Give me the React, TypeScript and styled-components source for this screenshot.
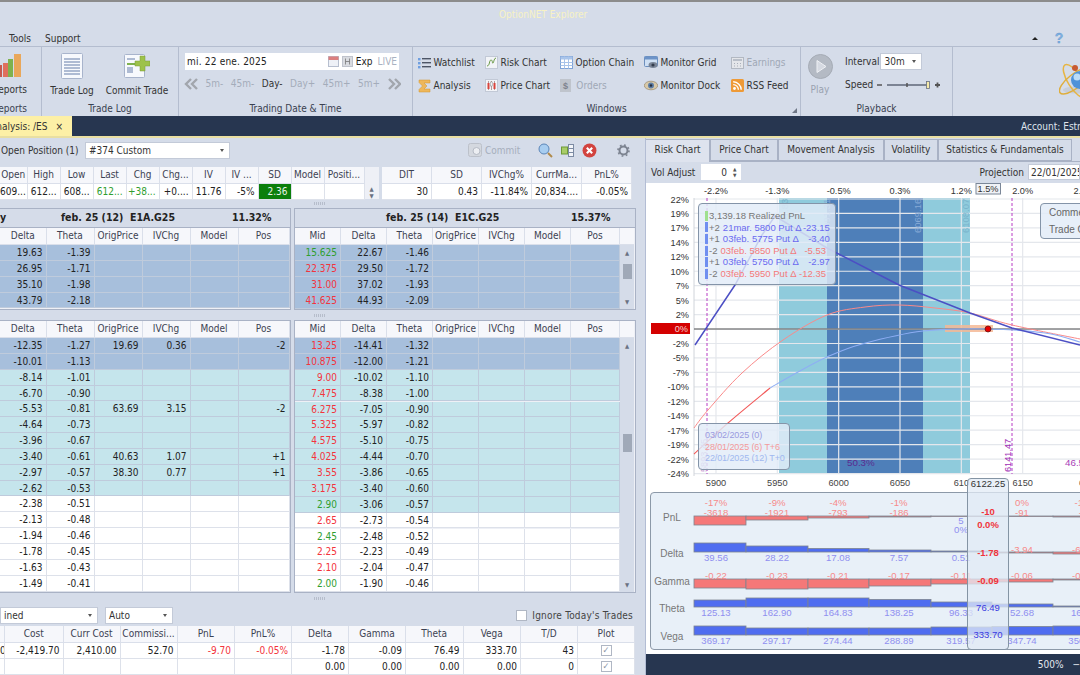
import React from 'react';
import styled, { createGlobalStyle } from 'styled-components';

const BG = '#d5dce9';
const NAVY = '#273650';
const UI_FONT = '"DejaVu Sans Condensed", "Noto Sans", sans-serif';

const Global = createGlobalStyle`
  html, body { margin: 0; padding: 0; height: 100%; overflow: hidden; background: ${BG}; }
  body { font-family: ${UI_FONT}; font-size: 10px; color: #222; }
  #root { width: 1080px; height: 675px; overflow: hidden; }
`;

const Page = styled.div`
  width: 1080px;
  height: 675px;
  overflow: hidden;
  display: flex;
  flex-direction: column;
  background: ${BG};
`;

const TitleBar = styled.div`
  flex: none;
  height: 28px;
  border-top: 2px solid #8c8c8c;
  padding-left: 6px;
  box-sizing: content-box;
  text-align: center;
  line-height: 25px;
  color: #f7f2c4;
  font-size: 10px;
`;

const MenuBar = styled.div`
  flex: none;
  height: 16px;
  display: flex;
  align-items: center;
  padding: 0 16px 0 9px;
  gap: 14px;
  color: #333;
`;

const MenuSpacer = styled.div`
  flex: 1;
`;

const CollapseMark = styled.span`
  width: 0;
  height: 0;
  margin-right: 2px;
  border-left: 3px solid transparent;
  border-right: 3px solid transparent;
  border-bottom: 3.5px solid #222;
`;

const Ribbon = styled.div`
  flex: none;
  height: 69px;
  display: flex;
  border-top: 1px solid #b4bdcf;
`;

const RibbonGroup = styled.div<{ $w: number }>`
  flex: none;
  width: ${p => p.$w}px;
  display: flex;
  flex-direction: column;
  border-right: 1px solid #b4bdcf;
  position: relative;
  overflow: hidden;
  &:last-child { border-right: none; }
`;

const GroupBody = styled.div`
  flex: 1;
  display: flex;
  min-height: 0;
`;

const GroupLabel = styled.div`
  flex: none;
  height: 16px;
  line-height: 17px;
  text-align: center;
  color: #3a4150;
  white-space: nowrap;
`;

const ClippedLabel = styled(GroupLabel)`
  display: flex;
  justify-content: flex-end;
  width: 27px;
`;

const BigButton = styled.div<{ $w: number; $clip?: boolean }>`
  flex: none;
  width: ${p => p.$w}px;
  display: flex;
  flex-direction: column;
  align-items: ${p => (p.$clip ? 'flex-end' : 'center')};
  padding-top: 6px;
  color: #333;
  white-space: nowrap;
  span { margin-top: 6px; }
`;

const TradeBody = styled(GroupBody)`
  padding-left: 6px;
  gap: 8px;
`;

const DateBody = styled.div`
  flex: 1;
  padding: 6px 0 0 6px;
`;

const DateField = styled.div`
  width: 214px;
  height: 17px;
  background: #fff;
  display: flex;
  align-items: center;
  gap: 3px;
  padding: 0 2px;
  box-sizing: border-box;
`;

const DateText = styled.span`
  flex: 1;
  letter-spacing: 0.2px;
`;

const LiveText = styled.span`
  color: #a9b2c2;
  margin-left: 2px;
`;

const StepRow = styled.div`
  display: flex;
  align-items: center;
  height: 27px;
  gap: 7.500px;
  color: #a4acba;
  svg { flex: none; margin-left: -1px; }
`;

const StepActive = styled.span`
  color: #333;
`;

const WindowsGrid = styled.div`
  display: grid;
  grid-template-columns: 67px 75px 84px 87px 60px;
  grid-auto-rows: 23px;
  padding: 4px 0 0 4.500px;
  flex: 1;
`;

const WinItem = styled.div<{ $dim?: boolean }>`
  display: flex;
  align-items: center;
  gap: 3px;
  white-space: nowrap;
  color: ${p => (p.$dim ? '#a0a8b6' : '#333')};
`;

const CornerMark = styled.div`
  position: absolute;
  right: 3px;
  bottom: 3px;
  width: 0;
  height: 0;
  border-left: 5px solid transparent;
  border-bottom: 5px solid #6f7786;
`;

const PlayColumn = styled.div`
  flex: none;
  width: 38px;
  display: flex;
  flex-direction: column;
  align-items: center;
  padding-top: 7px;
  color: #9aa2b0;
  span { margin-top: 5px; }
`;

const PlayControls = styled.div`
  padding: 6px 0 0 6px;
  display: flex;
  flex-direction: column;
  gap: 6px;
`;

const PlayRow = styled.div`
  display: flex;
  align-items: center;
  gap: 1px;
  height: 17px;
  color: #333;
`;

const Combo = styled.div<{ $w: number }>`
  flex: none;
  width: ${p => p.$w}px;
  height: 17px;
  box-sizing: border-box;
  background: #fff;
  border: 1px solid #c3cad8;
  display: flex;
  align-items: center;
  justify-content: space-between;
  padding: 0 5px 0 3px;
  color: #333;
  white-space: nowrap;
  &::after {
    content: '';
    border-left: 2.5px solid transparent;
    border-right: 2.5px solid transparent;
    border-top: 3px solid #555;
  }
`;

const LogoBody = styled(GroupBody)`
  justify-content: flex-end;
  padding-top: 12px;
`;

const TabBar = styled.div`
  flex: none;
  height: 20px;
  background: ${NAVY};
  display: flex;
  justify-content: space-between;
  align-items: stretch;
  border-bottom: 2px solid #e9dfa2;
`;

const DocTab = styled.div`
  width: 72px;
  background: #fdf0a6;
  display: flex;
  justify-content: flex-end;
  align-items: center;
  gap: 8px;
  padding: 1px 9px 0 0;
  box-sizing: border-box;
  overflow: hidden;
  white-space: nowrap;
  color: #333;
`;

const AccountText = styled.div`
  line-height: 22px;
  color: #dfe4ec;
  white-space: nowrap;
  width: 59px;
`;

const Workspace = styled.div`
  flex: 1;
  min-height: 0;
  display: flex;
`;

const LeftPane = styled.div`
  flex: none;
  width: 640px;
  overflow: hidden;
  display: flex;
  flex-direction: column;
`;

const Splitter = styled.div`
  flex: none;
  width: 6px;
  background: ${BG};
  border-right: 1px solid #b3bdd4;
  box-sizing: border-box;
`;

const PositionBar = styled.div`
  flex: none;
  height: 28px;
  display: flex;
  align-items: center;
  padding: 0 0 4px 1px;
  box-sizing: border-box;
  color: #333;
`;

const PositionLabel = styled.span`
  width: 84px;
  white-space: nowrap;
`;

const ToolIcons = styled.div`
  margin-left: 238px;
  display: flex;
  align-items: center;
`;

const CommitLabel = styled.span`
  color: #a6aebc;
  margin: 0 18px 0 2px;
`;

const IconGap = styled.span<{ $w: number }>`
  width: ${p => p.$w}px;
`;

const SummaryRow = styled.div`
  flex: none;
  display: flex;
  height: 32px;
  margin-top: 1px;
`;

const Grid = styled.div<{ $cols: string }>`
  display: grid;
  grid-template-columns: ${p => p.$cols};
`;

const HeadCell = styled.div`
  height: 17px;
  line-height: 16px;
  background: #f6f7fb;
  border-right: 1px solid #dadfea;
  border-bottom: 1px solid #dadfea;
  box-sizing: border-box;
  text-align: center;
  color: #3c4252;
  white-space: nowrap;
  overflow: hidden;
  padding: 0 1px;
`;

const ValueCell = styled.div<{ $bg?: string; $color?: string }>`
  height: 15.85px;
  line-height: 16px;
  background: ${p => p.$bg || '#fff'};
  color: ${p => p.$color || '#222'};
  border-right: 1px solid ${p => (p.$bg && p.$bg !== '#fff' ? '#bfcbdc' : '#dde1ea')};
  border-bottom: 1px solid ${p => (p.$bg && p.$bg !== '#fff' ? '#bfcbdc' : '#dde1ea')};
  box-sizing: border-box;
  text-align: right;
  padding-right: 3px;
  white-space: nowrap;
  overflow: hidden;
`;

const SummaryScroll = styled.div`
  width: 14px;
  height: 32px;
  background: #eef0f6;
  display: flex;
  flex-direction: column;
  justify-content: flex-end;
  align-items: center;
  color: #6a7282;
  font-size: 6px;
  line-height: 7px;
`;

const SecondSummary = styled(Grid)`
  margin-left: 3.500px;
`;

const GreenCell = styled(ValueCell)`
  background: #0b7f0b;
  color: #e8f3e8;
`;

const TablesRow = styled.div<{ $h: number }>`
  flex: none;
  height: ${p => p.$h}px;
  display: flex;
  gap: 3px;
`;

const OptionTable = styled.div<{ $w: number }>`
  flex: none;
  width: ${p => p.$w}px;
  border: 1px solid #a9b2c5;
  border-left: none;
  box-sizing: border-box;
  display: flex;
  flex-direction: column;
  overflow: hidden;
  background: #eef0f6;
`;

const RightTable = styled(OptionTable)`
  border-left: 1px solid #a9b2c5;
`;

const TableTitle = styled.div<{ $stub: number; $gap: number }>`
  flex: none;
  height: 19px;
  display: flex;
  align-items: center;
  padding-bottom: 2px;
  background: ${BG};
  font-weight: 700;
  font-size: 10.5px;
  color: #222;
  white-space: nowrap;
  border-bottom: 1px solid #a9b2c5;
  box-sizing: border-box;
  span:first-child { width: ${p => p.$stub}px; }
  span:nth-child(2) { width: 113px; margin-right: ${p => p.$gap}px; }
`;

const TableBody = styled.div`
  flex: 1;
  display: flex;
  min-height: 0;
`;

const Scrollbar = styled.div`
  flex: none;
  width: 14px;
  background: ${BG};
  display: flex;
  flex-direction: column;
  align-items: center;
  color: #6a7282;
  font-size: 6px;
  padding: 4px 0;
  box-sizing: border-box;
`;

const ScrollThumb = styled.div<{ $top: number; $h: number }>`
  width: 9px;
  height: ${p => p.$h}px;
  margin-top: ${p => p.$top}px;
  margin-bottom: auto;
  background: #a0a9b8;
`;

const HeaderEnd = styled(HeadCell)`
  border-right: none;
`;

const SplitGrip = styled.div<{ $h: number }>`
  flex: none;
  height: ${p => p.$h}px;
  display: flex;
  justify-content: center;
  align-items: center;
  &::after {
    content: '';
    width: 12px;
    height: 3px;
    background: repeating-linear-gradient(90deg, #b6bdcb 0 1px, transparent 1px 2px);
  }
`;

const LowerBar = styled.div`
  flex: none;
  height: 22px;
  display: flex;
  align-items: center;
  gap: 7px;
  padding-right: 7px;
  color: #333;
`;

const IgnoreBox = styled.label`
  margin-left: auto;
  display: flex;
  align-items: center;
  gap: 5px;
  color: #444;
  letter-spacing: 0.2px;
`;

const CheckBox = styled.span`
  width: 9px;
  height: 9px;
  border: 1px solid #b0b7c4;
  background: #fff;
  display: inline-flex;
  align-items: center;
  justify-content: center;
  color: #8a93a3;
  font-size: 9px;
  line-height: 9px;
`;

const CenterCell = styled(ValueCell)`
  display: flex;
  align-items: center;
  justify-content: center;
  padding: 0;
`;

const RightPane = styled.div`
  flex: none;
  width: 434px;
  display: flex;
  flex-direction: column;
`;

const TabStrip = styled.div`
  flex: none;
  height: 24px;
  padding-top: 1px;
  box-sizing: border-box;
  display: flex;
  align-items: stretch;
  border-bottom: 1px solid #a9b2c5;
`;

const ChartTab = styled.div<{ $w: number; $active?: boolean }>`
  flex: none;
  width: ${p => p.$w}px;
  box-sizing: border-box;
  text-align: center;
  line-height: 20px;
  white-space: nowrap;
  color: #333;
  background: ${p => (p.$active ? '#dee3ee' : BG)};
  border: 1px solid #a9b2c5;
  border-left: ${p => (p.$active ? 'none' : '1px solid #a9b2c5')};
  margin-bottom: ${p => (p.$active ? '-1px' : '0')};
  border-bottom: ${p => (p.$active ? 'none' : '1px solid #a9b2c5')};
`;

const ControlRow = styled.div`
  flex: none;
  height: 21px;
  display: flex;
  align-items: center;
  padding: 0 0 1px 5px;
  box-sizing: border-box;
  color: #333;
  white-space: nowrap;
`;

const Spin = styled.div`
  width: 45px;
  height: 16px;
  margin-left: 6px;
  background: #fff;
  box-sizing: border-box;
  display: flex;
  align-items: center;
  justify-content: flex-end;
  padding-right: 4px;
  gap: 6px;
`;

const SpinArrows = styled.span`
  display: inline-flex;
  flex-direction: column;
  font-size: 5px;
  line-height: 6px;
  color: #555;
`;

const ProjectionLabel = styled.span`
  margin-left: 239px;
`;

const DateBox = styled.div`
  margin-left: 4px;
  width: 60px;
  height: 16px;
  line-height: 15px;
  padding-left: 2px;
  background: #fff;
  border: 1px solid #c3cad8;
  box-sizing: border-box;
  overflow: hidden;
`;

const ChartArea = styled.div`
  flex: 1;
  min-height: 0;
  background: #fff;
  position: relative;
  overflow: hidden;
`;

const ChartSvg = styled.svg`
  display: block;
  font-family: "Liberation Sans", sans-serif;
  font-size: 9.200px;
`;

const StatsChart = styled(ChartSvg)`
  font-size: 9.600px;
`;

const PanelWrap = styled.div`
  position: absolute;
  left: 4px;
  top: 309px;
  width: 440px;
  height: 158px;
  background: #e8f0f8;
  border: 1px solid #8c99a8;
  border-radius: 4px;
  box-sizing: border-box;
`;

const Overlay = styled.div<{ $l: number; $t: number; $w: number; $h: number }>`
  position: absolute;
  left: ${p => p.$l}px;
  top: ${p => p.$t}px;
  width: ${p => p.$w}px;
  height: ${p => p.$h}px;
  box-sizing: border-box;
  background: rgba(226, 235, 248, 0.82);
  border: 1px solid #8494a8;
  border-radius: 4px;
  font-family: "Liberation Sans", sans-serif;
  font-size: 9.500px;
  overflow: hidden;
`;

const LegendBox = styled(Overlay)`
  padding-top: 6px;
`;

const LegendRow = styled.div`
  height: 11.600px;
  line-height: 11.600px;
  display: flex;
  align-items: center;
  white-space: nowrap;
  color: #777;
  span { flex: none; }
`;

const LegendMark = styled.span<{ $c: string }>`
  width: 3px;
  height: 10px;
  background: ${p => p.$c};
  margin: 0 1px 0 6px;
`;

const LegendName = styled.span<{ $c: string; $w: number }>`
  color: ${p => p.$c};
  width: ${p => p.$w}px;
  margin-left: 3px;
`;

const LegendValue = styled.span<{ $c: string }>`
  color: ${p => p.$c};
  width: 32px;
  text-align: right;
`;

const CommentTitle = styled.div`
  color: #666;
  font-size: 10px;
  padding: 3px 0 3px 8px;
  white-space: nowrap;
`;

const DatesRow = styled.div<{ $c: string }>`
  color: ${p => p.$c};
  padding-left: 6px;
  line-height: 11.600px;
  font-size: 9px;
  letter-spacing: -0.1px;
  white-space: nowrap;
`;

const DatesBox = styled(Overlay)`
  padding-top: 6px;
`;

const PriceColumn = styled.div`
  position: absolute;
  left: 321px;
  top: 295px;
  width: 42px;
  height: 172px;
  box-sizing: border-box;
  background: rgba(226, 235, 246, 0.75);
  border: 1px solid #8494a4;
  border-radius: 4px;
  display: grid;
  grid-template-rows: 10px 28px 13px 28px 28px 27px 27px;
  text-align: center;
  font-family: "Liberation Sans", sans-serif;
  font-size: 9.500px;
`;

const PriceCell = styled.div<{ $c?: string; $b?: boolean }>`
  color: ${p => p.$c || '#333'};
  font-weight: ${p => (p.$b ? 600 : 400)};
  display: flex;
  align-items: flex-end;
  justify-content: center;
  line-height: 11px;
`;

const StatusBar = styled.div`
  flex: none;
  height: 21px;
  background: ${NAVY};
  color: #e4e8ef;
  display: flex;
  align-items: center;
  justify-content: flex-end;
  gap: 9px;
  white-space: nowrap;
  overflow: hidden;
`;

/* ---------- icons ---------- */

const ReportsIcon = () => (
  <svg width="27" height="25" viewBox="0 0 27 25">
    <rect x="-4" y="12" width="6" height="12" fill="#c65b50" />
    <rect x="3" y="10" width="5" height="14" fill="#e0705e" />
    <rect x="8" y="6" width="5" height="18" fill="#7fb24e" />
    <rect x="14" y="1" width="7" height="23" fill="#e9a75a" />
  </svg>
);

const DoubleChevron = ({ right }: { right?: boolean }) => (
  <svg width="14" height="14" viewBox="0 0 14 14">
    <path
      d={right ? 'M2 2l5 5-5 5M8 2l5 5-5 5' : 'M7 2L2 7l5 5M13 2L8 7l5 5'}
      fill="none"
      stroke="#a2a6ad"
      strokeWidth="2.400"
    />
  </svg>
);

const DocIcon = () => (
  <svg width="22" height="26" viewBox="0 0 22 26">
    <rect x="0.500" y="0.500" width="21" height="25" rx="1" fill="#f7f9fd" stroke="#a8b4cc" />
    {[5, 8, 11, 14, 17, 20].map(y => (
      <rect key={y} x="3" y={y} width="16" height="2" fill="#aebbd3" />
    ))}
  </svg>
);

const CommitIcon = () => (
  <svg width="26" height="26" viewBox="0 0 26 26">
    <rect x="0.500" y="1.500" width="20" height="23" rx="1" fill="#f7f9fd" stroke="#a8b4cc" />
    <rect x="3" y="5" width="8" height="2" fill="#aebbd3" />
    <rect x="3" y="10" width="10" height="2" fill="#7fb24e" />
    <rect x="3" y="14" width="6" height="6" fill="#aebbd3" />
    <path d="M16 3h5v5h5v5h-5v5h-5v-5h-5V8h5z" fill="#9dc24a" stroke="#7a9a38" strokeWidth="0.500" />
  </svg>
);

const WatchIcon = () => (
  <svg width="13" height="12" viewBox="0 0 13 12">
    {[1, 5, 9].map(y => (
      <g key={y}>
        <rect x="0" y={y} width="2.500" height="2.400" fill="#6f9fe0" />
        <rect x="4" y={y} width="9" height="1.400" fill="#4d5566" />
      </g>
    ))}
  </svg>
);

const SigmaIcon = () => (
  <svg width="13" height="14" viewBox="0 0 13 14">
    <path d="M1 1h11v3H6l3 3-3 3h6v3H1V10.500L4.500 7 1 3.500z" fill="#eeb75a" stroke="#d0962c" strokeWidth="0.500" />
  </svg>
);

const RiskIcon = () => (
  <svg width="13" height="13" viewBox="0 0 13 13">
    <rect x="0.500" y="0.500" width="12" height="12" fill="#f2f4f8" stroke="#c2c9d6" />
    <path d="M2 10c3 0 2-6 4-6s1 4 2 3 1-5 3-5" fill="none" stroke="#6c9a4a" />
  </svg>
);

const CandleIcon = () => (
  <svg width="13" height="13" viewBox="0 0 13 13">
    <rect x="0.500" y="0.500" width="12" height="12" fill="#f2f4f8" stroke="#c2c9d6" />
    <path d="M3.500 2v9M6.500 2v9M9.500 2v9" stroke="#8a5a5a" strokeWidth="0.600" />
    <rect x="2.500" y="4" width="2" height="6" fill="#d9443c" />
    <rect x="5.500" y="3" width="2" height="4" fill="#f2f4f8" stroke="#777" strokeWidth="0.400" />
    <rect x="8.500" y="4" width="2" height="6" fill="#d9443c" />
  </svg>
);

const TableIcon = () => (
  <svg width="13" height="13" viewBox="0 0 13 13">
    <rect x="0.500" y="0.500" width="12" height="12" fill="#fff" stroke="#7fa3d6" />
    <rect x="0.500" y="0.500" width="12" height="3" fill="#a9c4ea" />
    <path d="M0.500 6.500h12M0.500 9.500h12M4.500 0.500v12M8.500 0.500v12" stroke="#a9c4ea" fill="none" />
  </svg>
);

const OrdersIcon = () => (
  <svg width="11" height="13" viewBox="0 0 11 13">
    <rect width="11" height="13" fill="#bfc4cc" />
    <text x="5.500" y="10" textAnchor="middle" fontSize="9" fontWeight="700" fill="#7d838e" fontFamily="Liberation Sans">$</text>
  </svg>
);

const GridMonitorIcon = () => (
  <svg width="14" height="13" viewBox="0 0 14 13">
    <rect x="0.500" y="0.500" width="13" height="10" rx="1" fill="#cfe0f4" stroke="#6d8fbd" />
    <rect x="0.500" y="0.500" width="13" height="3" fill="#6d93c8" />
    <ellipse cx="9" cy="9" rx="4.500" ry="3" fill="#7a8597" />
    <circle cx="9" cy="9" r="1.600" fill="#333c4c" />
  </svg>
);

const EyeIcon = () => (
  <svg width="14" height="11" viewBox="0 0 14 11">
    <ellipse cx="7" cy="5.500" rx="6.700" ry="4.300" fill="#d8c9a8" stroke="#8b7a5c" strokeWidth="0.600" />
    <circle cx="7" cy="5.500" r="3" fill="#5e7ea6" />
    <circle cx="7" cy="5.500" r="1.300" fill="#27303f" />
  </svg>
);

const EarningsIcon = () => (
  <svg width="13" height="12" viewBox="0 0 13 12">
    <rect x="0.500" y="0.500" width="12" height="11" fill="#e4e6ea" stroke="#b2b8c2" />
    <rect x="2" y="2" width="9" height="2" fill="#b9bfc9" />
    <path d="M3 6.500h1M6 6.500h1M9 6.500h1M3 9h1M6 9h1M9 9h1" stroke="#a8aeb9" fill="none" />
  </svg>
);

const RssIcon = () => (
  <svg width="13" height="13" viewBox="0 0 13 13">
    <rect width="13" height="13" rx="1.500" fill="#ee9a37" />
    <circle cx="3.500" cy="9.500" r="1.400" fill="#fff" />
    <path d="M2.200 5.600a5.200 5.200 0 0 1 5.200 5.200M2.200 2.800a8 8 0 0 1 8 8" stroke="#fff" strokeWidth="1.400" fill="none" />
  </svg>
);

const PlayIcon = () => (
  <svg width="25" height="25" viewBox="0 0 25 25">
    <circle cx="12.500" cy="12.500" r="12" fill="#b4bac4" stroke="#a5abb5" />
    <path d="M9 6.500l9 6-9 6z" fill="#d6dae2" stroke="#eef0f4" />
  </svg>
);

const SliderIcon = () => (
  <svg width="64" height="10" viewBox="0 0 64 10">
    <path d="M0 5h5" stroke="#555" strokeWidth="1.500" />
    <path d="M10 5h41" stroke="#7c8494" strokeWidth="2" />
    <path d="M30 3v4" stroke="#555" strokeWidth="1.500" />
    <rect x="49.500" y="1.500" width="3" height="7" fill="#f5e9a8" stroke="#69707e" strokeWidth="0.800" />
    <path d="M60.500 2.500v5M58 5h5" stroke="#555" strokeWidth="1.800" />
  </svg>
);

const AtomIcon = () => (
  <svg width="26" height="44" viewBox="0 0 26 44">
    <ellipse cx="18" cy="31" rx="14" ry="3.500" fill="#c2c7d0" opacity="0.700" />
    <ellipse cx="16" cy="22" rx="19" ry="7" fill="none" stroke="#e6b544" strokeWidth="1.500" transform="rotate(58 16 22)" />
    <ellipse cx="16" cy="22" rx="19" ry="7" fill="none" stroke="#dfae3c" strokeWidth="1.500" transform="rotate(-38 16 22)" />
    <circle cx="21" cy="21" r="9" fill="#4f92d8" />
    <circle cx="18" cy="18" r="3.500" fill="#bcdcf6" />
    <circle cx="16" cy="9" r="3" fill="#c85a30" />
  </svg>
);

const HelpIcon = () => (
  <svg width="10" height="14" viewBox="0 0 10 14">
    <text x="5" y="12" textAnchor="middle" fontSize="14" fontWeight="700" fill="#7fb0e0" stroke="#5f94cc" strokeWidth="0.300" fontFamily="Liberation Sans">?</text>
  </svg>
);

const CalendarIcon = () => (
  <svg width="11" height="11" viewBox="0 0 11 11">
    <rect x="0.500" y="0.500" width="10" height="10" fill="#eef1f7" stroke="#b7bfcf" />
    <rect x="0.500" y="0.500" width="10" height="3.500" fill="#dc7f7f" />
  </svg>
);

const HBtn = () => (
  <svg width="11" height="11" viewBox="0 0 11 11">
    <rect x="0.500" y="0.500" width="10" height="10" fill="#d9dbe0" stroke="#bfc3cc" />
    <path d="M3.500 2.500v6M7.500 2.500v6M3.500 5.500h4" stroke="#777" fill="none" strokeWidth="0.800" />
  </svg>
);

const CommitGear = () => (
  <svg width="15" height="14" viewBox="0 0 15 14">
    <rect x="0.500" y="0.500" width="13" height="13" rx="2" fill="#d4d8df" stroke="#bcc1ca" />
    <circle cx="8.500" cy="8" r="3.500" fill="#eceef2" stroke="#b5bac4" />
  </svg>
);

const SearchIcon = () => (
  <svg width="15" height="15" viewBox="0 0 15 15">
    <circle cx="6" cy="6" r="5" fill="#a8cdf0" stroke="#5c86b8" />
    <path d="M10 10l4 4" stroke="#b08a4a" strokeWidth="2" />
  </svg>
);

const ColumnsIcon = () => (
  <svg width="13" height="13" viewBox="0 0 13 13">
    <rect x="0.500" y="3" width="6" height="7" fill="#a8cc68" stroke="#6f9a36" />
    <rect x="7.500" y="0.500" width="5" height="12" fill="#f3f5f9" stroke="#7c8ba3" />
    <path d="M7.500 4.500h5M7.500 8.500h5" stroke="#7c8ba3" fill="none" />
  </svg>
);

const CloseIcon = () => (
  <svg width="15" height="15" viewBox="0 0 14 14">
    <circle cx="7" cy="7" r="6.500" fill="#d2433e" />
    <path d="M4.500 4.500l5 5M9.500 4.500l-5 5" stroke="#fff" strokeWidth="2" />
  </svg>
);

const GearIcon = () => (
  <svg width="13" height="13" viewBox="0 0 13 13">
    <circle cx="6.500" cy="6.500" r="4" fill="none" stroke="#7c8390" strokeWidth="2" />
    <circle cx="6.500" cy="6.500" r="5.500" fill="none" stroke="#7c8390" strokeWidth="1.600" strokeDasharray="1.800 2.500" />
  </svg>
);

/* ---------- data ---------- */

const DARK = '#a7bfdc';
const TEAL = '#c5e5ec';
const WHITE = '#fff';
const RED = '#f3343c';
const GREEN = '#2f9e2f';

const LEFT_COLS = '46.500px repeat(4, 48px) 51px';
const RIGHT_COLS = '46px 46px 46px 46px 46px 46px 49px';

const leftTop: string[][] = [
  ['19.63', '-1.39'],
  ['26.95', '-1.71'],
  ['35.10', '-1.98'],
  ['43.79', '-2.18'],
];

const rightTop: [string, string, string, string][] = [
  ['15.625', '22.67', '-1.46', GREEN],
  ['22.375', '29.50', '-1.72', RED],
  ['31.00', '37.02', '-1.93', RED],
  ['41.625', '44.93', '-2.09', RED],
];

const leftBottom: string[][] = [
  ['-12.35', '-1.27', '19.69', '0.36', '', '-2'],
  ['-10.01', '-1.13', '', '', '', ''],
  ['-8.14', '-1.01', '', '', '', ''],
  ['-6.70', '-0.90', '', '', '', ''],
  ['-5.53', '-0.81', '63.69', '3.15', '', '-2'],
  ['-4.64', '-0.73', '', '', '', ''],
  ['-3.96', '-0.67', '', '', '', ''],
  ['-3.40', '-0.61', '40.63', '1.07', '', '+1'],
  ['-2.97', '-0.57', '38.30', '0.77', '', '+1'],
  ['-2.62', '-0.53', '', '', '', ''],
  ['-2.38', '-0.51', '', '', '', ''],
  ['-2.13', '-0.48', '', '', '', ''],
  ['-1.94', '-0.46', '', '', '', ''],
  ['-1.78', '-0.45', '', '', '', ''],
  ['-1.63', '-0.43', '', '', '', ''],
  ['-1.49', '-0.41', '', '', '', ''],
];

const rightBottom: [string, string, string, string][] = [
  ['13.25', '-14.41', '-1.32', RED],
  ['10.875', '-12.00', '-1.21', RED],
  ['9.00', '-10.02', '-1.10', RED],
  ['7.475', '-8.38', '-1.00', RED],
  ['6.275', '-7.05', '-0.90', RED],
  ['5.325', '-5.97', '-0.82', RED],
  ['4.575', '-5.10', '-0.75', RED],
  ['4.025', '-4.44', '-0.70', RED],
  ['3.55', '-3.86', '-0.65', RED],
  ['3.175', '-3.40', '-0.60', RED],
  ['2.90', '-3.06', '-0.57', GREEN],
  ['2.65', '-2.73', '-0.54', RED],
  ['2.45', '-2.48', '-0.52', GREEN],
  ['2.25', '-2.23', '-0.49', RED],
  ['2.10', '-2.04', '-0.47', RED],
  ['2.00', '-1.90', '-0.46', GREEN],
];

const HEAD_L = ['Delta', 'Theta', 'OrigPrice', 'IVChg', 'Model', 'Pos'];
const HEAD_R = ['Mid', 'Delta', 'Theta', 'OrigPrice', 'IVChg', 'Model', 'Pos'];

const leftBg = (i: number) => (i < 2 ? DARK : i < 10 ? TEAL : WHITE);
const rightBg = (i: number) => (i < 2 ? DARK : i < 11 ? TEAL : WHITE);

const TableHead = ({ cols, names, extra }: { cols: string; names: string[]; extra?: boolean }) => (
  <Grid $cols={extra ? cols + ' 14px' : cols}>
    {names.map(n => (
      <HeadCell key={n}>{n}</HeadCell>
    ))}
    {extra && <HeaderEnd />}
  </Grid>
);

/* ---------- chart ---------- */

const Y_LABELS = ['22%', '19%', '17%', '14%', '12%', '10%', '7%', '5%', '2%', '', '-2%', '-5%', '-7%', '-10%', '-12%', '-14%', '-17%', '-19%', '-22%', '-24%'];
const X_VALS = [5900, 5950, 6000, 6050, 6100, 6150, 6200];
const TOP_PCT = ['-2.2%', '-1.3%', '-0.5%', '0.3%', '1.2%', '2.0%', '2.7%'];
const xOf = (v: number) => 716 + (v - 5900) * 1.2267;
const yOf = (i: number) => 199 + 14.45 * i;

const smooth = (pts: number[][]) => {
  let d = `M${pts[0][0]} ${pts[0][1]}`;
  for (let i = 0; i < pts.length - 1; i++) {
    const p0 = pts[i - 1] || pts[i];
    const p1 = pts[i];
    const p2 = pts[i + 1];
    const p3 = pts[i + 2] || p2;
    const c1x = p1[0] + (p2[0] - p0[0]) / 6;
    const c1y = p1[1] + (p2[1] - p0[1]) / 6;
    const c2x = p2[0] - (p3[0] - p1[0]) / 6;
    const c2y = p2[1] - (p3[1] - p1[1]) / 6;
    d += ` C${c1x} ${c1y} ${c2x} ${c2y} ${p2[0]} ${p2[1]}`;
  }
  return d;
};

const T6 = smooth([[694, 428], [708, 410], [742, 373], [783, 340], [827, 315], [865, 307], [899, 305], [935, 308], [970, 313], [1012, 325], [1080, 339]]);
const T0_RED = smooth([[694, 454], [728, 423], [770, 388]]);
const T0_BLUE = smooth([[770, 388], [798, 372], [827, 357], [862, 344], [923, 331], [988, 329], [1045, 333], [1080, 342]]);

const RiskChart = () => (
  <ChartSvg width="434" height="472" viewBox="646 183 434 472">
    <rect x="779" y="198" width="191" height="276" fill="#8fcbdc" />
    <rect x="827" y="198" width="96" height="276" fill="#4e7fb9" />
    {Y_LABELS.map((_, i) => (
      <line key={i} x1="694" x2="1080" y1={yOf(i)} y2={yOf(i)} stroke="rgb(228,231,236)" strokeWidth="1.200" />
    ))}
    {X_VALS.map(v => (
      <line key={v} x1={xOf(v)} x2={xOf(v)} y1="198" y2="474" stroke="rgb(228,231,236)" strokeWidth="1.200" />
    ))}
    <line x1="694" x2="694" y1="198" y2="476" stroke="#d0d4da" />
    <line x1="707" x2="707" y1="198" y2="474" stroke="#b83cc4" strokeDasharray="3 2" />
    <line x1="1012" x2="1012" y1="198" y2="474" stroke="#b83cc4" strokeDasharray="3 2" />

    <g fontSize="9.500">
      <text transform="translate(971 233) rotate(-90)" dy="-2" fill="#7ab4cc">6108.07</text>
      <text transform="translate(922 233) rotate(-90)" dy="-1" fill="#86aad6">6069.16</text>
      <text transform="translate(830 233) rotate(-90)" fill="#86aad6">5991.31</text>
      <text transform="translate(789 233) rotate(-90)" dy="-1" fill="#7ab4cc">5951.83</text>
    </g>

    <rect x="945" y="325" width="48" height="7" fill="#f5b895" opacity="0.850" />
    <line x1="694" x2="1080" y1="329" y2="329" stroke="#555" strokeWidth="1.200" />
    <path d={T6} fill="none" stroke="#fa8a8a" strokeWidth="1" />
    <path d={T0_RED} fill="none" stroke="#f25a5a" strokeWidth="1.100" />
    <path d={T0_BLUE} fill="none" stroke="#8eaef4" strokeWidth="1.100" />
    <polyline points="695,345 707,327 735,285 762,235 775,216 827,248 899,285 970,313 1012,328 1080,345" fill="none" stroke="#4c4fc4" strokeWidth="1.500" />
    <circle cx="988" cy="329" r="3" fill="#e80000" stroke="#5a1010" strokeWidth="0.700" />

    <rect x="651" y="323" width="39" height="11" fill="#d40000" />
    <text x="688" y="332" textAnchor="end" fill="#f4d0d0">0%</text>
    {Y_LABELS.map((l, i) => (
      <text key={i} x="689" y={yOf(i) + 3.500} textAnchor="end" fill="#333">{l}</text>
    ))}
    {TOP_PCT.map((l, i) => (
      <text key={l} x={xOf(X_VALS[i])} y="194" textAnchor="middle" fill="#333">{l}</text>
    ))}
    <rect x="976" y="183.500" width="24.500" height="10.500" fill="#f0f2f6" stroke="#7b8798" />
    <text x="988" y="192" textAnchor="middle" fill="#333">1.5%</text>
    {X_VALS.map(v => (
      <text key={v} x={xOf(v)} y="486" textAnchor="middle" fill="#444">{v === 6100 ? '610' : v === 6200 ? '62' : v}</text>
    ))}

    <text transform="translate(707 472) rotate(-90)" fill="#c49ad0">5893.45</text>
    <text transform="translate(1011 472) rotate(-90)" fill="#a02eb4">6141.47</text>
    <text x="847" y="466" fill="#5a2a90" fontSize="9.800">50.3%</text>
    <text x="1065" y="466" fill="#a93fb8" fontSize="9.800">46.5%</text>
  </ChartSvg>
);

const STAT_COLS = [694, 746, 808, 869, 931, 992, 1053, 1115];

// signed bar height per column for each row of the stats panel (negative goes up)
const STAT_ROWS = [
  { base: 516, color: '#f57878', h: [9, 4, 2, 1, 0.500, 0.500, 1] },
  { base: 552, color: '#4f6df0', h: [-9, -6, -3.500, -2, -1, 1, 2], negColor: '#f57878' },
  { base: 579, color: '#f57878', h: [9, 10, 9, 7, 5, 3, 1] },
  { base: 607, color: '#4f6df0', h: [-7, -9, -9, -7.500, -5, -3, -1] },
  { base: 635, color: '#4f6df0', h: [-9, -7, -7, -7, -8, -8.500, -9] },
];

const STAT_RED = '#f78a8a';
const STAT_BLUE = '#8f8ff0';

const STAT_TEXT: [number, number, string, string][] = [
  [716, 505.500, '-17%', STAT_RED], [777, 505.500, '-9%', STAT_RED], [838, 505.500, '-4%', STAT_RED], [899, 505.500, '-1%', STAT_RED], [1022, 505.500, '0%', STAT_RED], [1083, 505.500, '-1%', STAT_RED],
  [716, 515.500, '-3618', STAT_RED], [777, 515.500, '-1921', STAT_RED], [838, 515.500, '-793', STAT_RED], [899, 515.500, '-186', STAT_RED], [1022, 515.500, '-91', STAT_RED], [1083, 515.500, '-4', STAT_RED],
  [961, 524, '5', STAT_BLUE], [961, 533, '0%', STAT_BLUE],
  [716, 561, '39.56', STAT_BLUE], [777, 561, '28.22', STAT_BLUE], [838, 561, '17.08', STAT_BLUE], [899, 561, '7.57', STAT_BLUE], [961, 561, '0.51', STAT_BLUE],
  [1022, 552.500, '-3.94', STAT_RED], [1083, 552.500, '-6.12', STAT_RED],
  [716, 579, '-0.22', STAT_RED], [777, 579, '-0.23', STAT_RED], [838, 579, '-0.21', STAT_RED], [899, 579, '-0.17', STAT_RED], [961, 579, '-0.11', STAT_RED], [1022, 579, '-0.06', STAT_RED], [1083, 579, '-0.03', STAT_RED],
  [716, 616, '125.13', STAT_BLUE], [777, 616, '162.90', STAT_BLUE], [838, 616, '164.83', STAT_BLUE], [899, 616, '138.25', STAT_BLUE], [961, 616, '96.33', STAT_BLUE], [1022, 616, '52.68', STAT_BLUE], [1083, 616, '16.02', STAT_BLUE],
  [716, 644, '369.17', STAT_BLUE], [777, 644, '297.17', STAT_BLUE], [838, 644, '274.44', STAT_BLUE], [899, 644, '288.89', STAT_BLUE], [961, 644, '319.57', STAT_BLUE], [1022, 644, '347.74', STAT_BLUE], [1083, 644, '350.12', STAT_BLUE],
];

const STAT_NAMES: [string, number][] = [['PnL', 520.500], ['Delta', 556.500], ['Gamma', 584.500], ['Theta', 611.500], ['Vega', 639.500]];

const StatsSvg = () => (
  <StatsChart width="434" height="156" viewBox="651 493 434 156">
    {STAT_ROWS.map(row => (
      <g key={row.base}>
        {row.h.map((h, i) => {
          const x = STAT_COLS[i];
          const w = STAT_COLS[i + 1] - x;
          const fill = row.negColor && h > 0 ? row.negColor : row.color;
          return (
            <rect key={i} x={x} y={h < 0 ? row.base + h : row.base} width={w} height={Math.abs(h)} fill={fill} stroke="#7d8490" strokeWidth="0.800" />
          );
        })}
      </g>
    ))}
    {STAT_TEXT.map(([x, y, t, c]) => (
      <text key={`${x}${y}`} x={x} y={y} textAnchor="middle" fill={c}>{t}</text>
    ))}
    {STAT_NAMES.map(([n, y]) => (
      <text key={n} x="672" y={y} textAnchor="middle" fill="#777" fontSize="10">{n}</text>
    ))}
  </StatsChart>
);

const legend = [
  ['+2', '21mar. 5800 Put Δ', '-23.15', '#6a6af0'],
  ['+1', '03feb. 5775 Put Δ', '-3.40', '#6a6af0'],
  ['-2', '03feb. 5850 Put Δ', '-5.53', '#f47a7a'],
  ['+1', '03feb. 5750 Put Δ', '-2.97', '#6a6af0'],
  ['-2', '03feb. 5950 Put Δ', '-12.35', '#f47a7a'],
] as const;

const summaryHead = ['Open', 'High', 'Low', 'Last', 'Chg', 'Chg...', 'IV', 'IV ...', 'SD', 'Model', 'Positi...'];
const SUMMARY_COLS = '27.500px repeat(9, 33px) 40px';

const bottomHead = ['', 'Cost', 'Curr Cost', 'Commissi...', 'PnL', 'PnL%', 'Delta', 'Gamma', 'Theta', 'Vega', 'T/D', 'Plot'];
const BOTTOM_COLS = '5px 58.500px 57px 57px 57.500px 57px 57px 57px 57.500px 57.500px 57px 57px';

export default function App() {
  return (
    <Page>
      <Global />
      <TitleBar>OptionNET Explorer</TitleBar>
      <MenuBar>
        <span>Tools</span>
        <span>Support</span>
        <MenuSpacer />
        <CollapseMark />
        <HelpIcon />
      </MenuBar>
      <Ribbon>
        <RibbonGroup $w={41}>
          <GroupBody>
            <BigButton $w={27} $clip>
              <ReportsIcon />
              <span>Reports</span>
            </BigButton>
          </GroupBody>
          <ClippedLabel>Reports</ClippedLabel>
        </RibbonGroup>
        <RibbonGroup $w={136}>
          <TradeBody>
            <BigButton $w={48}>
              <DocIcon />
              <span>Trade Log</span>
            </BigButton>
            <BigButton $w={66}>
              <CommitIcon />
              <span>Commit Trade</span>
            </BigButton>
          </TradeBody>
          <GroupLabel>Trade Log</GroupLabel>
        </RibbonGroup>
        <RibbonGroup $w={233}>
          <DateBody>
            <DateField>
              <DateText>mi. 22 ene. 2025</DateText>
              <CalendarIcon />
              <HBtn />
              <span>Exp</span>
              <LiveText>LIVE</LiveText>
            </DateField>
            <StepRow>
              <DoubleChevron />
              <span>5m-</span>
              <span>45m-</span>
              <StepActive>Day-</StepActive>
              <span>Day+</span>
              <span>45m+</span>
              <span>5m+</span>
              <DoubleChevron right />
            </StepRow>
          </DateBody>
          <GroupLabel>Trading Date &amp; Time</GroupLabel>
        </RibbonGroup>
        <RibbonGroup $w={387}>
          <GroupBody>
            <WindowsGrid>
              <WinItem><WatchIcon />Watchlist</WinItem>
              <WinItem><RiskIcon />Risk Chart</WinItem>
              <WinItem><TableIcon />Option Chain</WinItem>
              <WinItem><GridMonitorIcon />Monitor Grid</WinItem>
              <WinItem $dim><EarningsIcon />Earnings</WinItem>
              <WinItem><SigmaIcon />Analysis</WinItem>
              <WinItem><CandleIcon />Price Chart</WinItem>
              <WinItem $dim><OrdersIcon />&nbsp;Orders</WinItem>
              <WinItem><EyeIcon />Monitor Dock</WinItem>
              <WinItem><RssIcon />RSS Feed</WinItem>
            </WindowsGrid>
          </GroupBody>
          <GroupLabel>Windows</GroupLabel>
          <CornerMark />
        </RibbonGroup>
        <RibbonGroup $w={151}>
          <GroupBody>
            <PlayColumn>
              <PlayIcon />
              <span>Play</span>
            </PlayColumn>
            <PlayControls>
              <PlayRow>Interval<Combo $w={42}>30m</Combo></PlayRow>
              <PlayRow>Speed&nbsp;<SliderIcon /></PlayRow>
            </PlayControls>
          </GroupBody>
          <GroupLabel>Playback</GroupLabel>
        </RibbonGroup>
        <RibbonGroup $w={132}>
          <LogoBody>
            <AtomIcon />
          </LogoBody>
        </RibbonGroup>
      </Ribbon>
      <TabBar>
        <DocTab>
          <span>Analysis: /ES</span>
          <span>×</span>
        </DocTab>
        <AccountText>Account: Estrategia</AccountText>
      </TabBar>
      <Workspace>
        <LeftPane>
          <PositionBar>
            <PositionLabel>Open Position (1)</PositionLabel>
            <Combo $w={145}>#374 Custom</Combo>
            <ToolIcons>
              <CommitGear />
              <CommitLabel>Commit</CommitLabel>
              <SearchIcon />
              <IconGap $w={8} />
              <ColumnsIcon />
              <IconGap $w={8} />
              <CloseIcon />
              <IconGap $w={20} />
              <GearIcon />
            </ToolIcons>
          </PositionBar>
          <SummaryRow>
            <Grid $cols={SUMMARY_COLS}>
              {summaryHead.map(h => (
                <HeadCell key={h}>{h}</HeadCell>
              ))}
              <ValueCell>609...</ValueCell>
              <ValueCell>612...</ValueCell>
              <ValueCell>608...</ValueCell>
              <ValueCell $color={GREEN}>612...</ValueCell>
              <ValueCell $color={GREEN}>+38...</ValueCell>
              <ValueCell>+0....</ValueCell>
              <ValueCell>11.76</ValueCell>
              <ValueCell>-5%</ValueCell>
              <GreenCell>2.36</GreenCell>
              <ValueCell />
              <ValueCell />
            </Grid>
            <SummaryScroll>
              <span>▲</span>
              <span>▼</span>
            </SummaryScroll>
            <SecondSummary $cols="repeat(5, 50px)">
              {['DIT', 'SD', 'IVChg%', 'CurrMa...', 'PnL%'].map(h => (
                <HeadCell key={h}>{h}</HeadCell>
              ))}
              {['30', '0.43', '-11.84%', '20,834....', '-0.05%'].map(v => (
                <ValueCell key={v}>{v}</ValueCell>
              ))}
            </SecondSummary>
          </SummaryRow>
          <SplitGrip $h={9} />
          <TablesRow $h={102}>
            <OptionTable $w={291}>
              <TableTitle $stub={61} $gap={58}>
                <span>y</span>
                <span>feb. 25 (12)&nbsp; E1A.G25</span>
                <span>11.32%</span>
              </TableTitle>
              <TableHead cols={LEFT_COLS} names={HEAD_L} />
              <Grid $cols={LEFT_COLS}>
                {leftTop.flatMap((r, i) =>
                  [...r, '', '', '', ''].map((v, j) => (
                    <ValueCell key={`${i}-${j}`} $bg={DARK}>{v}</ValueCell>
                  ))
                )}
              </Grid>
            </OptionTable>
            <RightTable $w={342}>
              <TableTitle $stub={91} $gap={72}>
                <span />
                <span>feb. 25 (14)&nbsp; E1C.G25</span>
                <span>15.37%</span>
              </TableTitle>
              <TableHead cols={RIGHT_COLS} names={HEAD_R} extra />
              <TableBody>
                <Grid $cols={RIGHT_COLS}>
                  {rightTop.flatMap(([mid, d, t, c], i) =>
                    [mid, d, t, '', '', '', ''].map((v, j) => (
                      <ValueCell key={`${i}-${j}`} $bg={DARK} $color={j === 0 ? c : undefined}>{v}</ValueCell>
                    ))
                  )}
                </Grid>
                <Scrollbar>
                  <span>▲</span>
                  <ScrollThumb $top={8} $h={15} />
                  <span>▼</span>
                </Scrollbar>
              </TableBody>
            </RightTable>
          </TablesRow>
          <SplitGrip $h={10} />
          <TablesRow $h={273}>
            <OptionTable $w={291}>
              <TableHead cols={LEFT_COLS} names={HEAD_L} />
              <Grid $cols={LEFT_COLS}>
                {leftBottom.flatMap((r, i) =>
                  r.map((v, j) => (
                    <ValueCell key={`${i}-${j}`} $bg={leftBg(i)}>{v}</ValueCell>
                  ))
                )}
              </Grid>
            </OptionTable>
            <RightTable $w={342}>
              <TableHead cols={RIGHT_COLS} names={HEAD_R} extra />
              <TableBody>
                <Grid $cols={RIGHT_COLS}>
                  {rightBottom.flatMap(([mid, d, t, c], i) =>
                    [mid, d, t, '', '', '', ''].map((v, j) => (
                      <ValueCell key={`${i}-${j}`} $bg={rightBg(i)} $color={j === 0 ? c : undefined}>{v}</ValueCell>
                    ))
                  )}
                </Grid>
                <Scrollbar>
                  <span>▲</span>
                  <ScrollThumb $top={85} $h={18} />
                  <span>▼</span>
                </Scrollbar>
              </TableBody>
            </RightTable>
          </TablesRow>
          <SplitGrip $h={11} />
          <LowerBar>
            <Combo $w={98}>ined</Combo>
            <Combo $w={68}>Auto</Combo>
            <IgnoreBox>
              <CheckBox />
              Ignore Today's Trades
            </IgnoreBox>
          </LowerBar>
          <Grid $cols={BOTTOM_COLS}>
            {bottomHead.map((h, i) => (
              <HeadCell key={i}>{h}</HeadCell>
            ))}
            {['0', '-2,419.70', '2,410.00', '52.70'].map(v => (
              <ValueCell key={v}>{v}</ValueCell>
            ))}
            <ValueCell $color={RED}>-9.70</ValueCell>
            <ValueCell $color={RED}>-0.05%</ValueCell>
            {['-1.78', '-0.09', '76.49', '333.70', '43'].map(v => (
              <ValueCell key={v}>{v}</ValueCell>
            ))}
            <CenterCell><CheckBox>✓</CheckBox></CenterCell>
            <ValueCell /><ValueCell /><ValueCell /><ValueCell /><ValueCell /><ValueCell />
            {['0.00', '0.00', '0.00', '0.00', '0'].map((v, i) => (
              <ValueCell key={i}>{v}</ValueCell>
            ))}
            <CenterCell><CheckBox>✓</CheckBox></CenterCell>
          </Grid>
        </LeftPane>
        <Splitter />
        <RightPane>
          <TabStrip>
            <ChartTab $w={64} $active>Risk Chart</ChartTab>
            <ChartTab $w={68}>Price Chart</ChartTab>
            <ChartTab $w={106}>Movement Analysis</ChartTab>
            <ChartTab $w={54}>Volatility</ChartTab>
            <ChartTab $w={134}>Statistics &amp; Fundamentals</ChartTab>
          </TabStrip>
          <ControlRow>
            Vol Adjust
            <Spin>
              0
              <SpinArrows><span>▲</span><span>▼</span></SpinArrows>
            </Spin>
            <ProjectionLabel>Projection</ProjectionLabel>
            <DateBox>22/01/2025</DateBox>
          </ControlRow>
          <ChartArea>
            <RiskChart />
            <PanelWrap>
              <StatsSvg />
            </PanelWrap>
            <LegendBox $l={52} $t={20} $w={138} $h={82}>
              <LegendRow>
                <LegendMark $c="#9fe08f" />
                <span>3,139.18 Realized PnL</span>
              </LegendRow>
              {legend.map(([qty, name, val, c]) => (
                <LegendRow key={name}>
                  <LegendMark $c="#6f8ff0" />
                  <span>{qty}</span>
                  <LegendName $c={c} $w={qty === '-2' ? 73.600 : 75}>{name}</LegendName>
                  <LegendValue $c={c}>{val}</LegendValue>
                </LegendRow>
              ))}
            </LegendBox>
            <Overlay $l={394} $t={20} $w={60} $h={36}>
              <CommentTitle>Comments</CommentTitle>
              <CommentTitle>Trade Open</CommentTitle>
            </Overlay>
            <DatesBox $l={52} $t={240} $w={92} $h={47}>
              <DatesRow $c="#9a9ae0">03/02/2025 (0)</DatesRow>
              <DatesRow $c="#f49a9a">28/01/2025 (6) T+6</DatesRow>
              <DatesRow $c="#a0b8f0">22/01/2025 (12) T+0</DatesRow>
            </DatesBox>
            <PriceColumn>
              <PriceCell>6122.25</PriceCell>
              <PriceCell $c="#f0343c" $b>-10</PriceCell>
              <PriceCell $c="#f0343c" $b>0.0%</PriceCell>
              <PriceCell $c="#f0343c" $b>-1.78</PriceCell>
              <PriceCell $c="#f0343c" $b>-0.09</PriceCell>
              <PriceCell $c="#3a3ae0">76.49</PriceCell>
              <PriceCell $c="#3a3ae0">333.70</PriceCell>
            </PriceColumn>
          </ChartArea>
          <StatusBar>
            <span>500%</span>
            <span>−</span>
          </StatusBar>
        </RightPane>
      </Workspace>
    </Page>
  );
}
